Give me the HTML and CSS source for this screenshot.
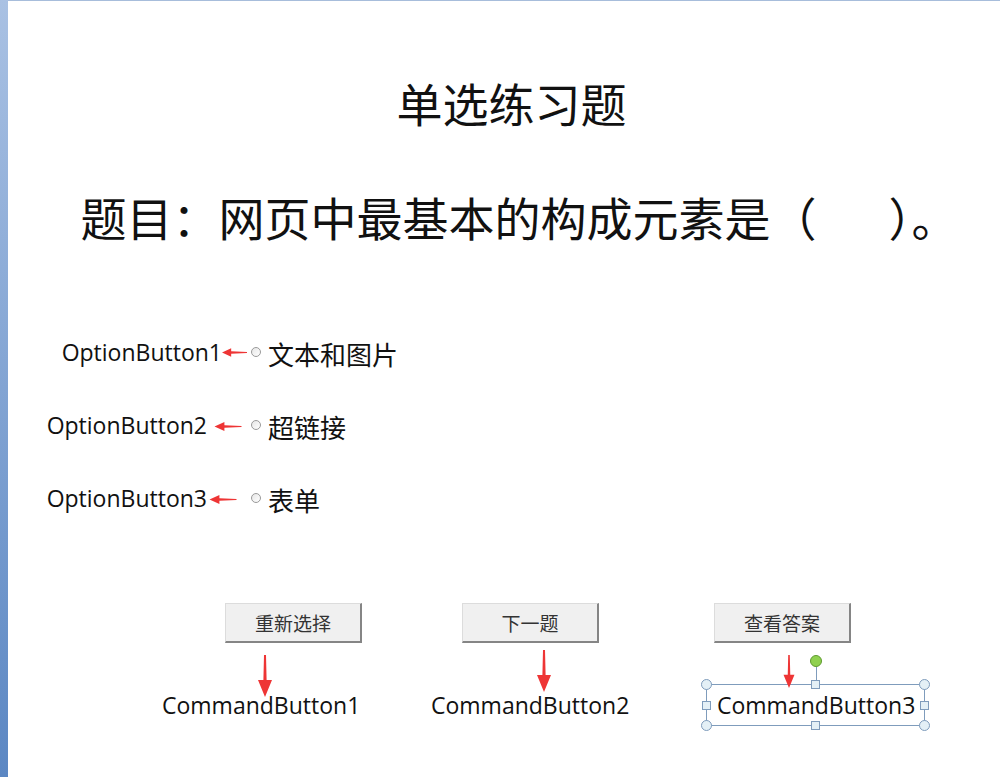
FILE: index.html
```html
<!DOCTYPE html>
<html lang="zh-CN">
<head>
  <meta charset="UTF-8">
  <title>单选练习题</title>
  <link rel="stylesheet" href="styles.css">
</head>
<body>

  <div class="screen">
    <div class="edge"></div>

    <main class="slide">
      <h1 class="title">单选练习题</h1>
      <p class="question">题目：网页中最基本的构成元素是（&nbsp;&nbsp;&nbsp;&nbsp;&nbsp;&nbsp;&nbsp;）。</p>

      <ul class="options">
        <li class="option">
          <div class="ctl ctl-1">
            <span class="ctl-name">OptionButton1</span>
            <svg class="arrow-left" viewBox="0 0 30 10"><polygon points="0,5 11,0 11,3.6 30,4.4 30,5.6 11,6.4 11,10"/></svg>
          </div>
          <span class="radio"></span>
          <span class="opt-text">文本和图片</span>
        </li>
        <li class="option">
          <div class="ctl ctl-2">
            <span class="ctl-name">OptionButton2</span>
            <svg class="arrow-left" viewBox="0 0 30 10"><polygon points="0,5 11,0 11,3.6 30,4.4 30,5.6 11,6.4 11,10"/></svg>
          </div>
          <span class="radio"></span>
          <span class="opt-text">超链接</span>
        </li>
        <li class="option">
          <div class="ctl ctl-3">
            <span class="ctl-name">OptionButton3</span>
            <svg class="arrow-left" viewBox="0 0 30 10"><polygon points="0,5 11,0 11,3.6 30,4.4 30,5.6 11,6.4 11,10"/></svg>
          </div>
          <span class="radio"></span>
          <span class="opt-text">表单</span>
        </li>
      </ul>

      <div class="commands">
        <div class="cmd cmd-1">
          <button class="cmd-btn">重新选择</button>
          <svg class="arrow-down" viewBox="0 0 14 42"><polygon points="6,0 8,0 8.6,25 14,25 7,42 0,25 5.4,25"/></svg>
          <div class="cmd-name">CommandButton1</div>
        </div>
        <div class="cmd cmd-2">
          <button class="cmd-btn">下一题</button>
          <svg class="arrow-down" viewBox="0 0 14 42"><polygon points="6,0 8,0 8.6,25 14,25 7,42 0,25 5.4,25"/></svg>
          <div class="cmd-name">CommandButton2</div>
        </div>
        <div class="cmd cmd-3">
          <button class="cmd-btn">查看答案</button>
          <svg class="arrow-down" viewBox="0 0 14 42"><polygon points="6,0 8,0 8.6,25 14,25 7,42 0,25 5.4,25"/></svg>
          <div class="cmd-name selected">
            CommandButton3
            <span class="rotate"></span>
            <span class="h-circle tl"></span>
            <span class="h-circle tr"></span>
            <span class="h-circle bl"></span>
            <span class="h-circle br"></span>
            <span class="h-square tm"></span>
            <span class="h-square bm"></span>
            <span class="h-square ml"></span>
            <span class="h-square mr"></span>
          </div>
        </div>
      </div>
    </main>
  </div>

</body>
</html>
```

FILE: styles.css
```css
body {
  margin: 0;
  background: #fff;
  color: #111;
  font-family: "Noto Sans CJK SC", sans-serif;
}

.screen {
  display: flex;
  min-height: 777px;
}

.edge {
  width: 8px;
  background: linear-gradient(to bottom, #a9c1e3, #5b87c3);
}

.slide {
  flex: 1;
  border-top: 1px solid #a7bddb;
}

.title {
  margin: 78px 0 0;
  padding-left: 15px;
  text-align: center;
  font-size: 46px;
  font-weight: normal;
  line-height: 46px;
}

.question {
  margin: 68px 0 0;
  padding-left: 30px;
  text-align: center;
  font-size: 46px;
  line-height: 46px;
  white-space: pre;
}

/* option rows */
.options {
  list-style: none;
  margin: 78px 0 0;
  padding: 0;
}

.option {
  display: flex;
  align-items: center;
  height: 73px;
}

.ctl {
  width: 240px;
  display: flex;
  justify-content: flex-end;
  align-items: center;
}

.ctl-name {
  font-family: "Open Sans", sans-serif;
  font-size: 23px;
  line-height: 26px;
  color: #111;
  margin-top: -4px;
}

.arrow-left {
  width: 28px;
  height: 9px;
  fill: #ee3535;
}

.ctl-1 .arrow-left { width: 25px; margin-right: 1px; margin-top: -2px; }
.ctl-2 .arrow-left { width: 30px; margin-left: 6px; margin-right: 5px; }
.ctl-3 .arrow-left { width: 30px; margin-left: 1px; margin-right: 10px; }

.radio {
  width: 8px;
  height: 8px;
  margin-left: 3px;
  margin-top: -4px;
  border: 1px solid #9a9a9a;
  border-radius: 50%;
  background: linear-gradient(135deg, #e6e6e6, #fff);
}

.opt-text {
  margin-left: 7px;
  font-size: 26px;
  line-height: 30px;
}

/* command buttons */
.commands {
  display: flex;
  margin-top: 67px;
  padding-left: 154px;
}

.cmd {
  position: relative;
  display: flex;
  flex-direction: column;
  align-items: flex-start;
}

.cmd-1 { width: 269px; }
.cmd-2 { width: 275px; }

.cmd-btn {
  width: 137px;
  height: 40px;
  padding: 0;
  font-family: "Noto Sans CJK SC", sans-serif;
  font-size: 19px;
  color: #333;
  background: #f0f0f0;
  border: 1px solid #dcdcdc;
  border-right: 2px solid #858585;
  border-bottom: 2px solid #858585;
}

.cmd-1 .cmd-btn { margin-left: 63px; }
.cmd-2 .cmd-btn { margin-left: 31px; }
.cmd-3 .cmd-btn { margin-left: 8px; }

.arrow-down {
  position: absolute;
  width: 14px;
  height: 42px;
  fill: #ee3535;
  z-index: 2;
}

.cmd-1 .arrow-down { left: 96px; top: 52px; }
.cmd-2 .arrow-down { left: 106px; top: 47px; }
.cmd-3 .arrow-down { left: 76px; top: 52px; height: 33px; }

.cmd-name {
  margin-top: 41px;
  height: 42px;
  line-height: 42px;
  font-family: "Open Sans", sans-serif;
  font-size: 23px;
  color: #111;
}

/* selected control with handles */
.selected {
  position: relative;
  box-sizing: border-box;
  width: 219px;
  padding-left: 10px;
  line-height: 40px;
  border: 1px solid #7f9cbc;
}

.rotate {
  position: absolute;
  left: 103px;
  top: -30px;
  width: 10px;
  height: 10px;
  border: 1px solid #5e9a2f;
  border-radius: 50%;
  background: #8fd14f;
}

.rotate::after {
  content: "";
  position: absolute;
  left: 5px;
  top: 11px;
  width: 1px;
  height: 15px;
  background: #7f9cbc;
}

.h-circle {
  position: absolute;
  width: 9px;
  height: 9px;
  border: 1px solid #7f9cbc;
  border-radius: 50%;
  background: #e4f0f6;
}

.h-square {
  position: absolute;
  width: 7px;
  height: 7px;
  border: 1px solid #7f9cbc;
  background: #e4f0f6;
}

.tl { left: -6px; top: -6px; }
.tr { right: -6px; top: -6px; }
.bl { left: -6px; bottom: -6px; }
.br { right: -6px; bottom: -6px; }
.tm { left: 104px; top: -5px; }
.bm { left: 104px; bottom: -5px; }
.ml { left: -5px; top: 16px; }
.mr { right: -5px; top: 16px; }
```
